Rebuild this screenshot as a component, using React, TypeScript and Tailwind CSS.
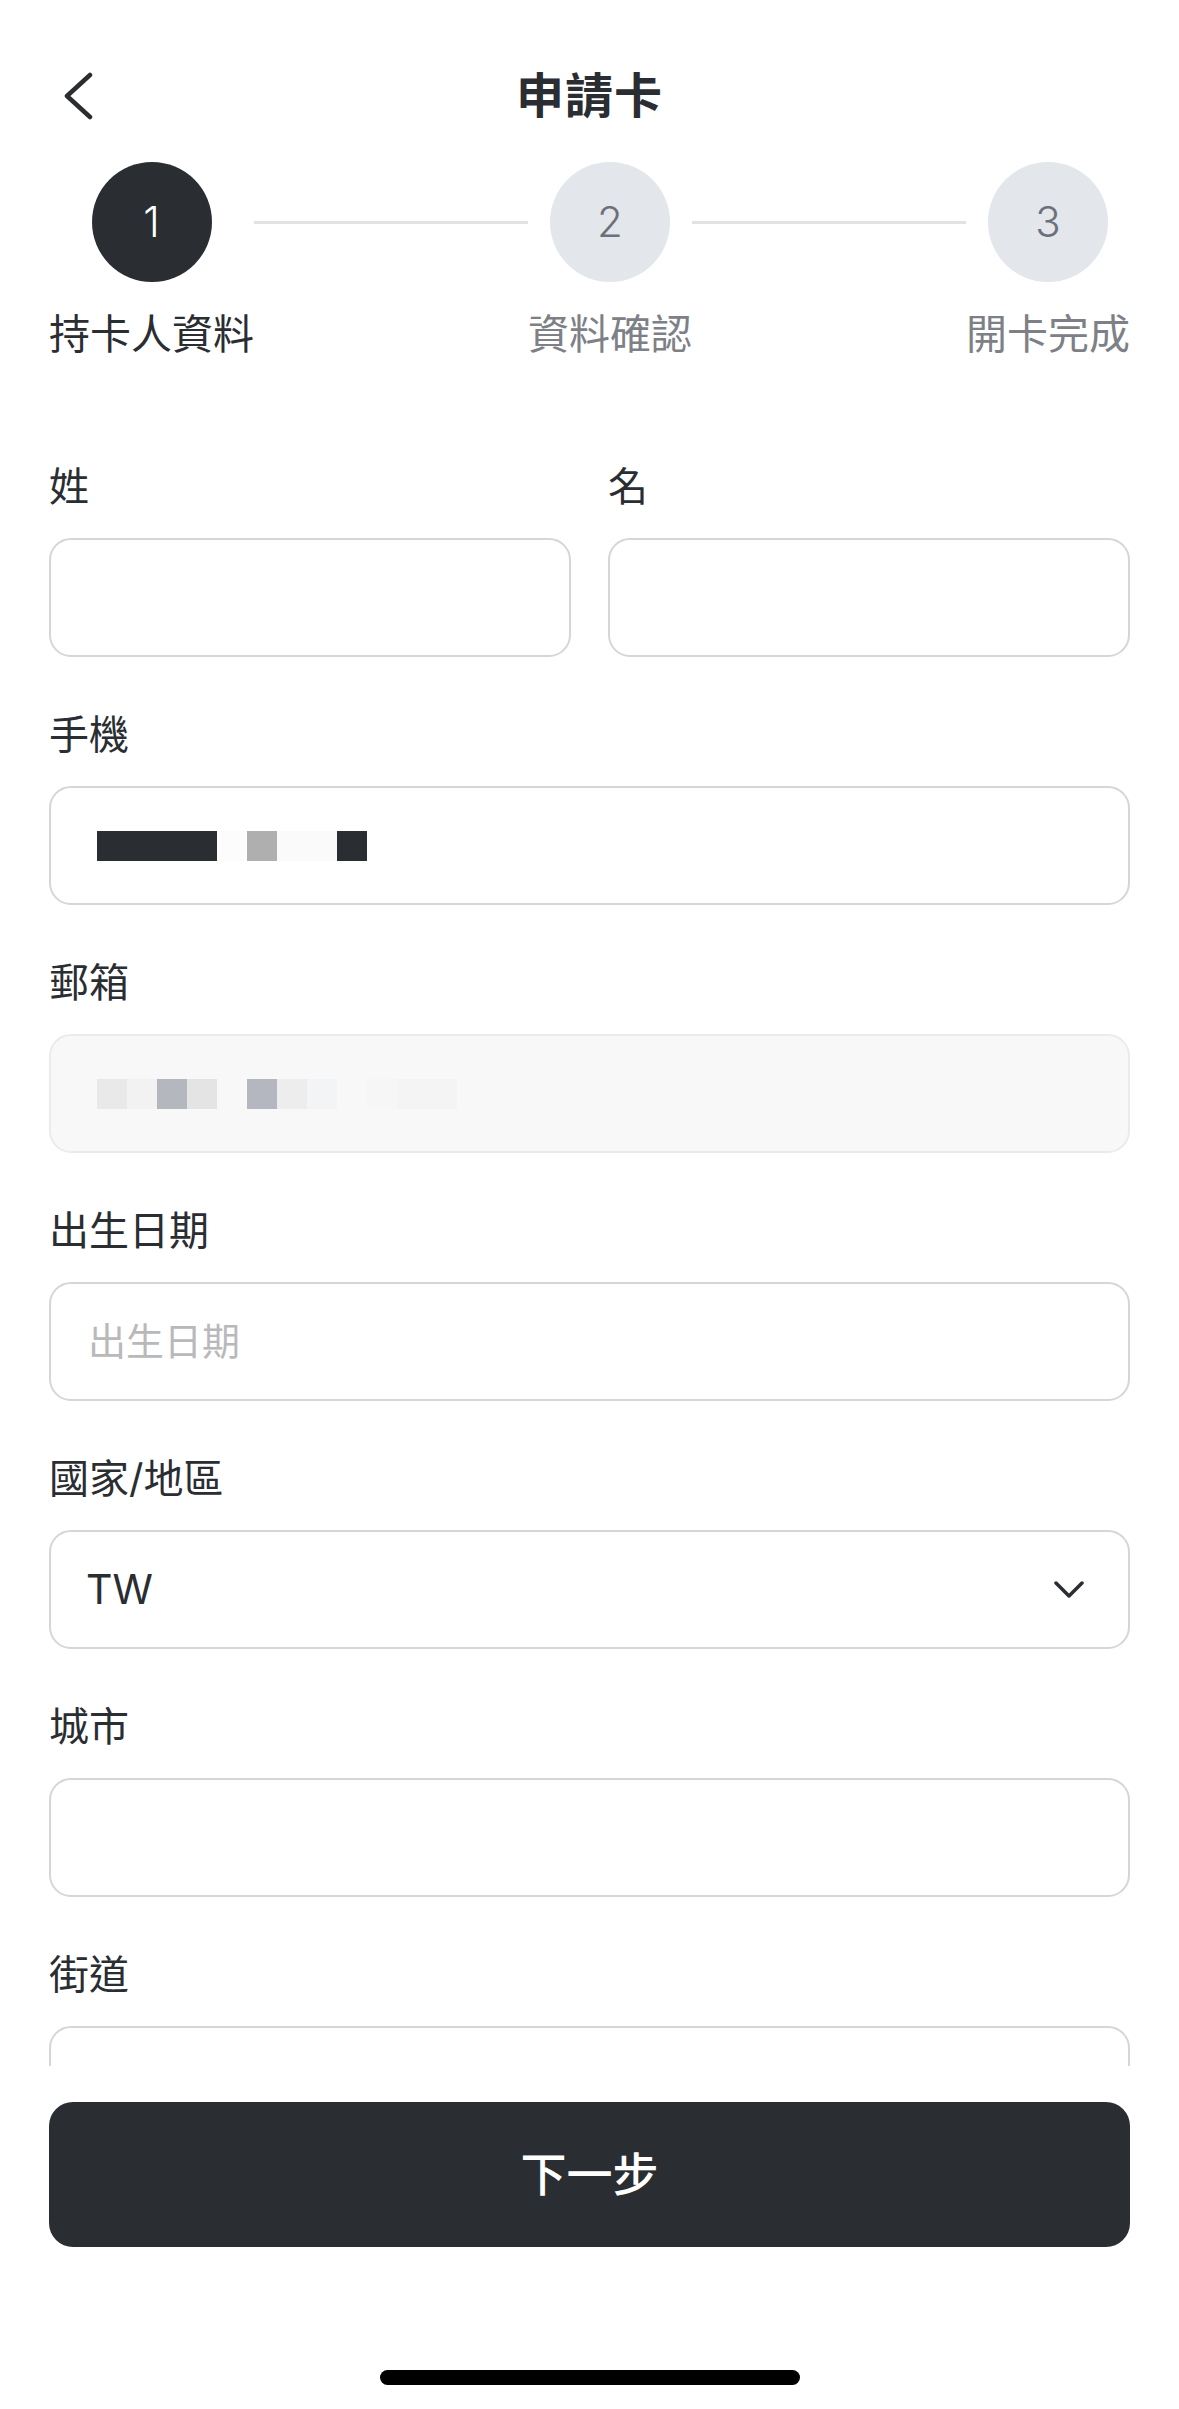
import React from "react";

const font = "font-['Inter','Noto_Sans_CJK_TC',sans-serif]";

type Step = { num: string; label: string; active?: boolean };

const steps: Step[] = [
    { num: "1", label: "持卡人資料", active: true },
    { num: "2", label: "資料確認" },
    { num: "3", label: "開卡完成" },
];

// pixelated masked values (30px cells)
const phoneCells = ["#2a2d31", "#2a2d31", "#2a2d31", "#2a2d31", "#fcfcfc", "#afafaf", "#fafafa", "#fafafa", "#2a2d31"];
const emailCells = ["#e9e9ea", "#f2f2f2", "#b5b7bf", "#e4e4e5", "#f8f8f9", "#b4b7c0", "#ededee", "#f3f4f5", "#f8f8f9", "#f6f6f7", "#f4f4f5", "#f4f4f5"];

function StepItem({ step }: { step: Step }) {
    return (
        <div className="flex flex-col items-center">
            <div
                className={`w-[120px] h-[120px] rounded-full flex items-center justify-center text-[42px] font-light leading-none ${
                    step.active ? "bg-[#2a2d31] text-white" : "bg-[#e3e6eb] text-[#6c707a]"
                }`}
            >
                {step.num}
            </div>
            <p
                className={`mt-[32px] text-[41px] leading-[41px] whitespace-nowrap ${
                    step.active ? "text-[#2a2d31]" : "text-[#7d8086]"
                }`}
            >
                {step.label}
            </p>
        </div>
    );
}

function Field({ label, children, className = "" }: { label: string; children?: React.ReactNode; className?: string }) {
    return (
        <div className={`flex flex-col gap-[31px] ${className}`}>
            <p className="pt-[4px] text-[40px] leading-[40px] text-[#2a2d31]">{label}</p>
            {children ?? <div className="h-[119px] rounded-[22px] border-2 border-[#d6d6d8] bg-white" />}
        </div>
    );
}

function Cells({ colors }: { colors: string[] }) {
    return (
        <div className="flex">
            {colors.map((c, i) => (
                <div key={i} className="w-[30px] h-[30px]" style={{ backgroundColor: c }} />
            ))}
        </div>
    );
}

export default function App() {
    return (
        <div className={`${font} w-[1179px] h-[2409px] bg-white flex flex-col overflow-hidden`}>
            <div className="h-[2066px] overflow-hidden shrink-0">
                <header className="mt-[48px] h-[96px] px-[49px] flex items-center justify-center relative">
                    <svg
                        className="absolute left-[63px] top-[24px]"
                        width="32"
                        height="48"
                        viewBox="0 0 32 48"
                        fill="none"
                        stroke="#2a2d31"
                        strokeWidth="4.5"
                        strokeLinecap="round"
                        strokeLinejoin="round"
                    >
                        <path d="M27 3 L4 24 L27 45" />
                    </svg>
                    <h1 className="text-[48px] leading-none font-bold text-[#2a2d31] tracking-[1px]">申請卡</h1>
                </header>

                <div className="mt-[18px] px-[49px] flex items-start">
                    <StepItem step={steps[0]} />
                    <div className="flex-1 h-[3px] bg-[#e2e2e4] mt-[59px]" />
                    <StepItem step={steps[1]} />
                    <div className="flex-1 h-[3px] bg-[#e2e2e4] mt-[59px]" />
                    <StepItem step={steps[2]} />
                </div>

                <div className="mt-[108px] px-[49px] flex flex-col gap-[54px]">
                    <div className="grid grid-cols-2 gap-[37px]">
                        <Field label="姓" />
                        <Field label="名" />
                    </div>
                    <Field label="手機">
                        <div className="h-[119px] rounded-[22px] border-2 border-[#d6d6d8] bg-white flex items-center pl-[46px]">
                            <Cells colors={phoneCells} />
                        </div>
                    </Field>
                    <Field label="郵箱">
                        <div className="h-[119px] rounded-[22px] border-2 border-[#ebebec] bg-[#f8f8f9] flex items-center pl-[46px]">
                            <Cells colors={emailCells} />
                        </div>
                    </Field>
                    <Field label="出生日期">
                        <div className="h-[119px] rounded-[22px] border-2 border-[#d6d6d8] bg-white flex items-center pl-[37px]">
                            <span className="text-[38px] text-[#b9b9bb]">出生日期</span>
                        </div>
                    </Field>
                    <Field label="國家/地區">
                        <div className="h-[119px] rounded-[22px] border-2 border-[#d6d6d8] bg-white flex items-center justify-between pl-[35px] pr-[44px]">
                            <span className="text-[41px] text-[#2a2d31]">TW</span>
                            <svg width="30" height="18" viewBox="0 0 30 18" fill="none" stroke="#2a2d31" strokeWidth="3.5" strokeLinecap="round" strokeLinejoin="round">
                                <path d="M2 2 L15 15 L28 2" />
                            </svg>
                        </div>
                    </Field>
                    <Field label="城市" />
                    <Field label="街道" />
                </div>
            </div>

            <div className="px-[49px] pt-[36px]">
                <button className="w-full h-[145px] rounded-[24px] bg-[#2a2d31] text-white text-[46px] font-medium">下一步</button>
            </div>

            <div className="mt-[123px] flex justify-center">
                <div className="w-[420px] h-[15px] rounded-full bg-black" />
            </div>
        </div>
    );
}
